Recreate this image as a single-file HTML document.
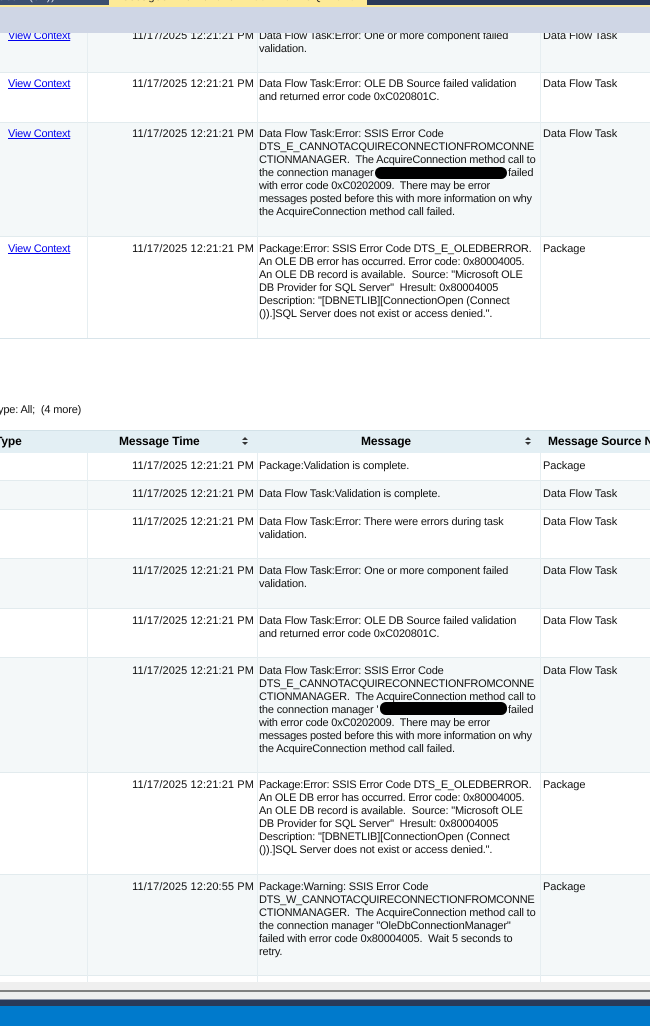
<!DOCTYPE html>
<html><head><meta charset="utf-8">
<style>
html,body{margin:0;padding:0;background:#fff}
#p{position:relative;width:650px;height:1026px;overflow:hidden;background:#fff;font:11px/13px "Liberation Sans",sans-serif;color:#111;text-rendering:geometricPrecision}
#p div{position:absolute}
.t{white-space:pre;letter-spacing:-.16px;margin-top:1px}
.a{color:#00e;text-decoration:underline;left:8px;letter-spacing:-.2px}
.d{right:396px;letter-spacing:.1px}
.n{letter-spacing:-.06px}
.x{letter-spacing:-.22px}
.y{letter-spacing:-.25px}
.w{letter-spacing:-.29px}
.v{width:1px;background:#e6eef1}
.h{left:0;width:650px;height:1px;background:#e2ebee}
.r{left:0;width:650px;background:#f4f8f9}
.b{font-size:12px;font-weight:bold;color:#000;white-space:pre;letter-spacing:-.1px}
.s{background:#000}
</style></head><body><div id="p">

<div class="r" style="top:33px;height:39px"></div>
<div class="r" style="top:123px;height:113px"></div>
<div class="h" style="top:72px"></div><div class="h" style="top:122px"></div><div class="h" style="top:236px"></div>
<div class="h" style="top:338px;background:#d8e4ea"></div>
<div class="v" style="left:87px;top:33px;height:305px"></div>
<div class="v" style="left:257px;top:33px;height:305px"></div>
<div class="v" style="left:540px;top:33px;height:305px"></div>

<div class="t a" style="top:29px">View Context</div>
<div class="t d" style="top:29px">11/17/2025 12:21:21 PM</div>
<div class="t" style="left:259px;top:29px">Data Flow Task:Error: One or more component failed
validation.</div>
<div class="t n" style="left:543px;top:29px">Data Flow Task</div>

<div class="t a" style="top:77px">View Context</div>
<div class="t d" style="top:77px">11/17/2025 12:21:21 PM</div>
<div class="t" style="left:259px;top:77px">Data Flow Task:Error: OLE DB Source failed validation
and returned error code 0xC020801C.</div>
<div class="t n" style="left:543px;top:77px">Data Flow Task</div>

<div class="t a" style="top:127px">View Context</div>
<div class="t d" style="top:127px">11/17/2025 12:21:21 PM</div>
<div class="t" style="left:259px;top:127px">Data Flow Task:Error: SSIS Error Code
<span class="x">DTS_E_CANNOTACQUIRECONNECTIONFROMCONNE</span>
CTIONMANAGER.  The AcquireConnection method call to
the connection manager</div>
<div class="t" style="left:508px;top:166px">failed</div>
<div class="t" style="left:259px;top:179px"><span class="x">with error code 0xC0202009.  There may be error</span>
<span class="y">messages posted before this with more information on why</span>
the AcquireConnection method call failed.</div>
<div class="t n" style="left:543px;top:127px">Data Flow Task</div>
<div class="s" style="left:375px;top:167px;width:132px;height:12px;border-radius:6px"></div>

<div class="t a" style="top:242px">View Context</div>
<div class="t d" style="top:242px">11/17/2025 12:21:21 PM</div>
<div class="t" style="left:259px;top:242px"><span class="x">Package:Error: SSIS Error Code DTS_E_OLEDBERROR.</span>
<span class="x">An OLE DB error has occurred. Error code: 0x80004005.</span>
An OLE DB record is available.  Source: "Microsoft OLE
DB Provider for SQL Server"  Hresult: 0x80004005
Description: "[DBNETLIB][ConnectionOpen (Connect
()).]SQL Server does not exist or access denied.".</div>
<div class="t n" style="left:543px;top:242px">Package</div>

<div class="t" style="left:-2px;top:403px">ype: All;  (4 more)</div>

<div style="left:0;top:430px;width:650px;height:23px;background:#e3eff4;border-top:1px solid #d3e2e8;box-sizing:border-box"></div>
<div class="b" style="left:-5px;top:435px">Type</div>
<div class="b" style="left:119px;top:435px">Message Time</div>
<div class="b" style="left:361px;top:435px">Message</div>
<div class="b" style="left:548px;top:435px">Message Source Name</div>
<svg style="position:absolute;left:241px;top:437px" width="8" height="8"><path d="M4 0L7 3H1zM4 8L7 5H1z" fill="#333"/></svg>
<svg style="position:absolute;left:524px;top:437px" width="8" height="8"><path d="M4 0L7 3H1zM4 8L7 5H1z" fill="#333"/></svg>

<div class="r" style="top:481px;height:28px"></div>
<div class="r" style="top:559px;height:49px"></div>
<div class="r" style="top:658px;height:114px"></div>
<div class="r" style="top:875px;height:100px"></div>
<div class="h" style="top:480px"></div><div class="h" style="top:509px"></div><div class="h" style="top:558px"></div><div class="h" style="top:608px"></div><div class="h" style="top:657px"></div><div class="h" style="top:772px"></div><div class="h" style="top:874px"></div><div class="h" style="top:975px"></div>
<div class="v" style="left:87px;top:453px;height:529px"></div>
<div class="v" style="left:257px;top:453px;height:529px"></div>
<div class="v" style="left:540px;top:453px;height:529px"></div>

<div class="t d" style="top:459px">11/17/2025 12:21:21 PM</div>
<div class="t" style="left:259px;top:459px">Package:Validation is complete.</div>
<div class="t n" style="left:543px;top:459px">Package</div>

<div class="t d" style="top:487px">11/17/2025 12:21:21 PM</div>
<div class="t" style="left:259px;top:487px">Data Flow Task:Validation is complete.</div>
<div class="t n" style="left:543px;top:487px">Data Flow Task</div>

<div class="t d" style="top:515px">11/17/2025 12:21:21 PM</div>
<div class="t" style="left:259px;top:515px">Data Flow Task:Error: There were errors during task
validation.</div>
<div class="t n" style="left:543px;top:515px">Data Flow Task</div>

<div class="t d" style="top:564px">11/17/2025 12:21:21 PM</div>
<div class="t" style="left:259px;top:564px">Data Flow Task:Error: One or more component failed
validation.</div>
<div class="t n" style="left:543px;top:564px">Data Flow Task</div>

<div class="t d" style="top:614px">11/17/2025 12:21:21 PM</div>
<div class="t" style="left:259px;top:614px">Data Flow Task:Error: OLE DB Source failed validation
and returned error code 0xC020801C.</div>
<div class="t n" style="left:543px;top:614px">Data Flow Task</div>

<div class="t d" style="top:664px">11/17/2025 12:21:21 PM</div>
<div class="t" style="left:259px;top:664px">Data Flow Task:Error: SSIS Error Code
<span class="x">DTS_E_CANNOTACQUIRECONNECTIONFROMCONNE</span>
CTIONMANAGER.  The AcquireConnection method call to
the connection manager '</div>
<div class="t" style="left:508px;top:703px">failed</div>
<div class="t" style="left:259px;top:716px"><span class="x">with error code 0xC0202009.  There may be error</span>
<span class="y">messages posted before this with more information on why</span>
the AcquireConnection method call failed.</div>
<div class="t n" style="left:543px;top:664px">Data Flow Task</div>
<div class="s" style="left:380px;top:702px;width:127px;height:13px;border-radius:6px"></div>

<div class="t d" style="top:778px">11/17/2025 12:21:21 PM</div>
<div class="t" style="left:259px;top:778px"><span class="x">Package:Error: SSIS Error Code DTS_E_OLEDBERROR.</span>
<span class="x">An OLE DB error has occurred. Error code: 0x80004005.</span>
An OLE DB record is available.  Source: "Microsoft OLE
DB Provider for SQL Server"  Hresult: 0x80004005
Description: "[DBNETLIB][ConnectionOpen (Connect
()).]SQL Server does not exist or access denied.".</div>
<div class="t n" style="left:543px;top:778px">Package</div>

<div class="t d" style="top:880px">11/17/2025 12:20:55 PM</div>
<div class="t" style="left:259px;top:880px">Package:Warning: SSIS Error Code
<span class="w">DTS_W_CANNOTACQUIRECONNECTIONFROMCONNE</span>
CTIONMANAGER.  The AcquireConnection method call to
the connection manager "OleDbConnectionManager"
failed with error code 0x80004005.  Wait 5 seconds to
retry.</div>
<div class="t n" style="left:543px;top:880px">Package</div>

<div style="left:0;top:0;width:650px;height:7px;background:#2b3a58"></div>
<div style="left:0;top:0;width:109px;height:5px;background:#3c5070"></div>
<div style="left:109px;top:0;width:258px;height:7px;background:#fdea97"></div>
<div class="t" style="left:113px;top:-10px;color:#222;letter-spacing:.6px">Messages  11/17/2025  1:00  1:07  SQL2016</div>
<div class="t" style="left:-2px;top:-10px;color:#dde3ee;letter-spacing:.6px">Scan (34))</div>
<div style="left:0;top:5px;width:109px;height:2px;background:#fdea97"></div>
<div style="left:367px;top:5px;width:283px;height:2px;background:#fdea97"></div>
<div style="left:0;top:7px;width:650px;height:26px;background:#cfd6e5"></div>

<div style="left:0;top:982px;width:650px;height:17px;background:#efefef"></div>
<div style="left:0;top:990px;width:650px;height:2px;background:#808080"></div>
<div style="left:0;top:999px;width:650px;height:1px;background:#8a93a8"></div>
<div style="left:0;top:1000px;width:650px;height:6px;background:#2a3a5a"></div>
<div style="left:0;top:1006px;width:650px;height:20px;background:#007acc"></div>
</div></body></html>
